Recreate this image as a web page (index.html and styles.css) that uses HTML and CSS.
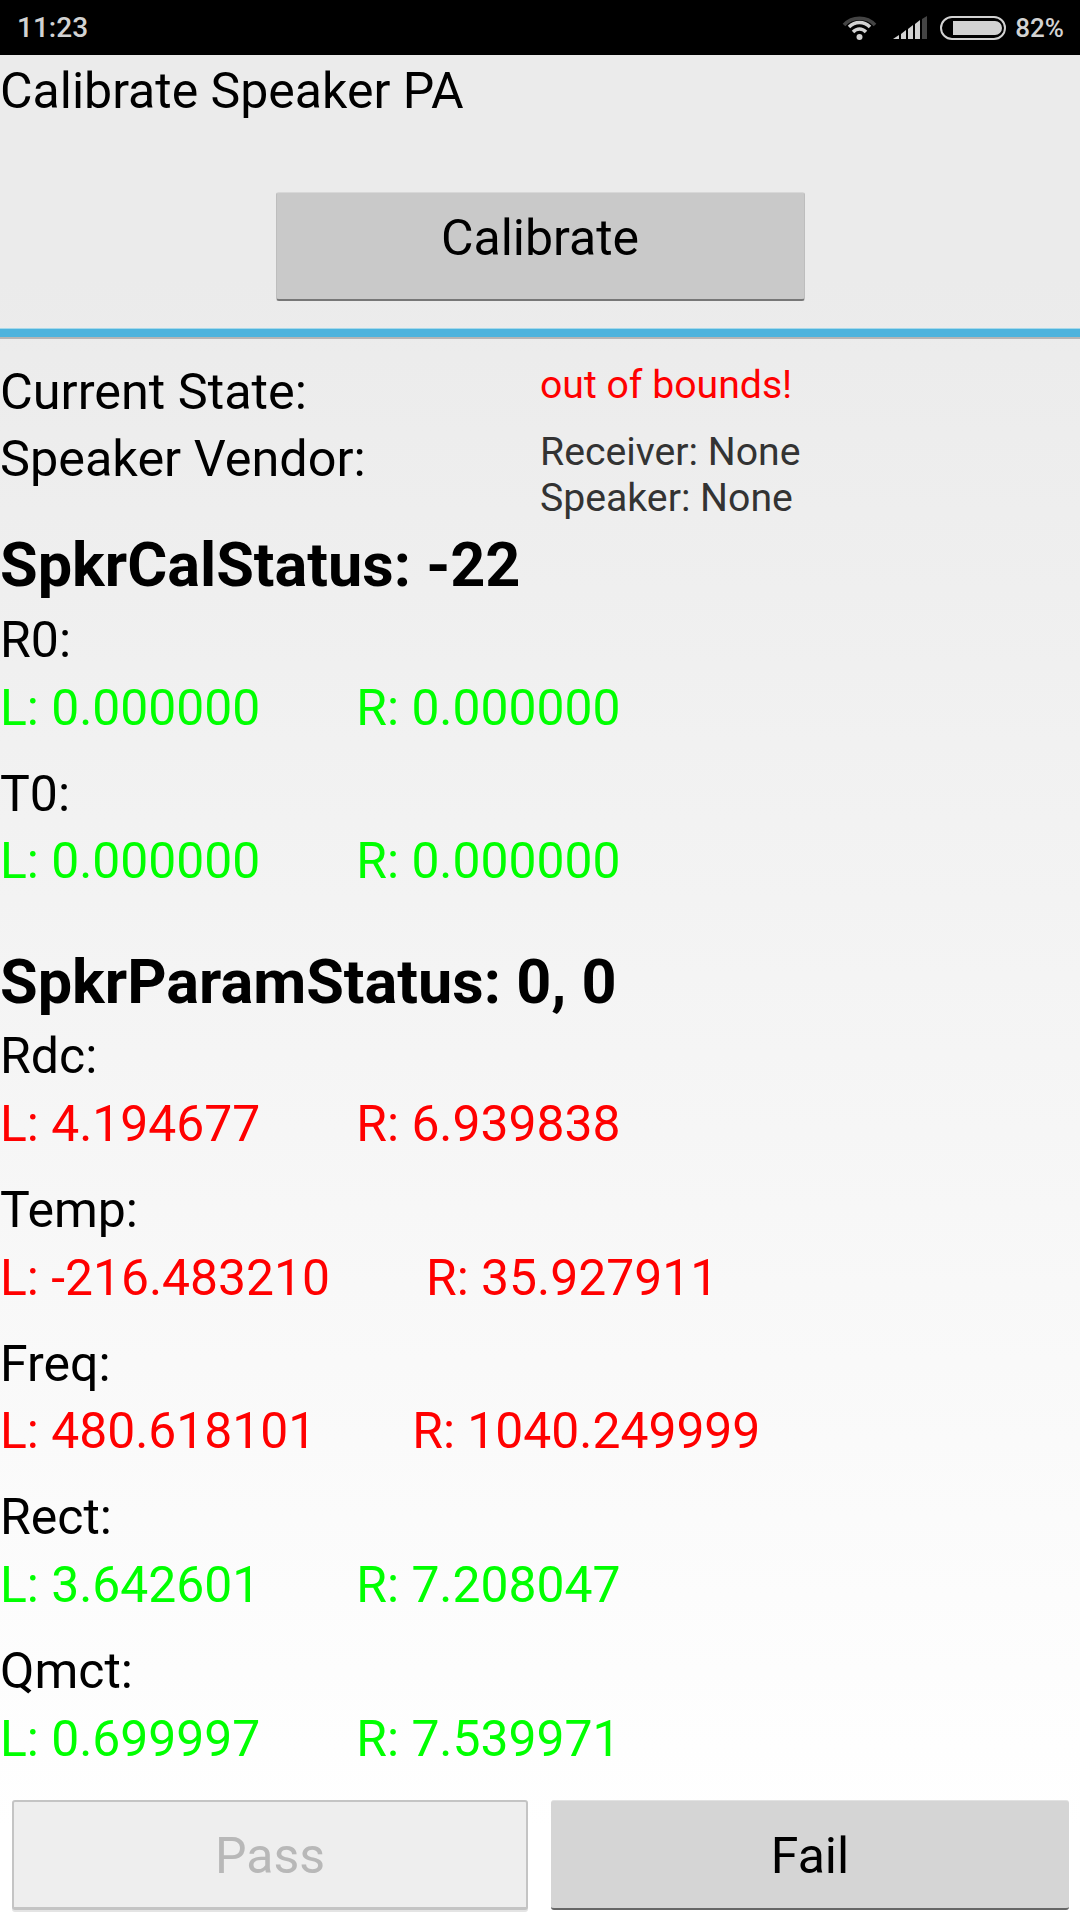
FILE: index.html
```html
<!DOCTYPE html>
<html lang="en">
<head>
    <meta charset="UTF-8">
    <meta name="viewport" content="width=device-width, initial-scale=1.0">
    <title>Calibrate Speaker PA</title>
    <link rel="stylesheet" href="styles.css">
</head>
<body>
    <div class="status-bar">
        <div class="clock">11:23</div>
        <div class="status-icons">
            <svg class="wifi" width="35" height="24" viewBox="0 0 35 24">
                <path class="wifi-off" d="M2 9 C10 0 25 0 33 9" />
                <path d="M7 11 C13 5 22 5 28 11" />
                <path d="M11 16 C15 12 20 12 24 16" />
                <circle cx="17.5" cy="21" r="3" />
            </svg>
            <svg class="signal" width="34" height="23" viewBox="0 0 34 23">
                <polygon points="0,23 6,19 6,23" />
                <polygon points="8,18 13,14 13,23 8,23" />
                <polygon points="15,13 20,9 20,23 15,23" />
                <polygon points="22,8 27,4 27,23 22,23" />
                <polygon class="signal-off" points="29,3 34,0 34,23 29,23" />
            </svg>
            <div class="battery"><div class="battery-level"></div></div>
            <div class="percent">82%</div>
        </div>
    </div>

    <div class="page">
        <div class="title">Calibrate Speaker PA</div>

        <div class="calibrate-wrap">
            <button class="btn calibrate-btn">Calibrate</button>
        </div>
        <div class="divider"></div>

        <div class="state-grid">
            <div class="state-label">Current State:</div>
            <div class="state-error">out of bounds!</div>
            <div class="state-label">Speaker Vendor:</div>
            <div class="state-vendor">Receiver: None<br>Speaker: None</div>
        </div>

        <h2 class="heading">SpkrCalStatus: -22</h2>
        <div class="param">
            <div class="param-name">R0:</div>
            <div class="values good"><span>L: 0.000000</span><span>R: 0.000000</span></div>
        </div>
        <div class="param">
            <div class="param-name">T0:</div>
            <div class="values good"><span>L: 0.000000</span><span>R: 0.000000</span></div>
        </div>

        <h2 class="heading heading-params">SpkrParamStatus: 0, 0</h2>
        <div class="param">
            <div class="param-name">Rdc:</div>
            <div class="values bad"><span>L: 4.194677</span><span>R: 6.939838</span></div>
        </div>
        <div class="param">
            <div class="param-name">Temp:</div>
            <div class="values bad"><span>L: -216.483210</span><span>R: 35.927911</span></div>
        </div>
        <div class="param">
            <div class="param-name">Freq:</div>
            <div class="values bad"><span>L: 480.618101</span><span>R: 1040.249999</span></div>
        </div>
        <div class="param">
            <div class="param-name">Rect:</div>
            <div class="values good"><span>L: 3.642601</span><span>R: 7.208047</span></div>
        </div>
        <div class="param">
            <div class="param-name">Qmct:</div>
            <div class="values good"><span>L: 0.699997</span><span>R: 7.539971</span></div>
        </div>

        <div class="bottom-buttons">
            <button class="btn pass-btn" disabled>Pass</button>
            <button class="btn fail-btn">Fail</button>
        </div>
    </div>
</body>
</html>
```

FILE: styles.css
```css
* {
    margin: 0;
    padding: 0;
    box-sizing: border-box;
}

body {
    font-family: Roboto, sans-serif;
    width: 1080px;
    height: 1920px;
    overflow: hidden;
    color: #000;
}

.status-bar {
    height: 55px;
    background: #000;
    color: #d2d2d2;
    display: flex;
    justify-content: space-between;
    align-items: center;
    padding: 0 16px 0 17px;
    font-size: 26px;
    font-weight: 500;
}

.clock {
    font-size: 28px;
}

.status-icons {
    display: flex;
    align-items: center;
}

.wifi {
    fill: none;
    stroke: #d2d2d2;
    stroke-width: 3.5;
    margin-right: 16px;
}

.wifi circle {
    fill: #d2d2d2;
    stroke: none;
}

.wifi .wifi-off {
    stroke: #444;
}

.signal {
    fill: #d2d2d2;
    margin-right: 13px;
}

.signal .signal-off {
    fill: #444;
}

.battery {
    width: 66px;
    height: 24px;
    border: 2px solid #d2d2d2;
    border-radius: 12px;
    padding: 3px 2px 3px 11px;
    margin-right: 9px;
}

.battery-level {
    height: 100%;
    background: #d2d2d2;
    border-radius: 0 8px 8px 0;
}

.page {
    height: 1865px;
    background: linear-gradient(#ebebeb, #ebebeb 12%, #fff 95%);
    display: flex;
    flex-direction: column;
}

.title {
    font-size: 50px;
    line-height: 56px;
    padding-top: 8px;
}

.calibrate-wrap {
    display: flex;
    justify-content: center;
    margin-top: 73px;
}

.btn {
    font-family: Roboto, sans-serif;
    font-size: 50px;
    color: #000;
    border: none;
    border-radius: 3px;
}

.calibrate-btn {
    width: 529px;
    height: 109px;
    padding-bottom: 16px;
    background: #c9c9c9;
    border: 1px solid #bdbdbd;
    border-top-color: #d8d8d8;
    border-bottom: 2px solid #777;
}

.divider {
    height: 11px;
    margin-top: 27px;
    background: #4db3dd;
    border-top: 1px solid #a5d8ea;
    border-bottom: 2px solid #b5b5b5;
}

.state-grid {
    display: grid;
    grid-template-columns: 540px 1fr;
    grid-template-rows: 67px auto;
    padding-top: 25px;
}

.state-label {
    font-size: 50.4px;
    line-height: 56px;
}

.state-error {
    font-size: 39.2px;
    line-height: 44px;
    margin-top: -1px;
    color: #f00;
}

.state-vendor {
    font-size: 39.2px;
    line-height: 46px;
    margin-top: -2px;
    color: #333;
}

.heading {
    font-size: 61.2px;
    line-height: 70px;
    font-weight: 700;
    margin-top: 9px;
    margin-bottom: 2px;
}

.heading-params {
    margin-top: 38px;
    margin-bottom: 1px;
}

.param {
    margin-bottom: 20.2px;
}

.param-name {
    font-size: 50px;
    line-height: 56px;
    margin-top: 10px;
}

.values {
    display: flex;
    gap: 96px;
    font-size: 49.8px;
    line-height: 56px;
    margin-top: 11.5px;
}

.good {
    color: #0f0;
}

.bad {
    color: #f00;
}

.bottom-buttons {
    display: flex;
    gap: 23px;
    padding: 0 0 10px 12px;
    margin-top: auto;
}

.bottom-buttons .btn {
    height: 110px;
    padding-top: 3px;
}

.pass-btn {
    width: 516px;
    background: #eee;
    color: #b8b8b8;
    border: 2px solid #c4c4c4;
    border-bottom-width: 3px;
    box-shadow: 0 2px 0 #e4e4e4;
}

.fail-btn {
    width: 518px;
    background: #d5d5d5;
    border-top: 1px solid #e2e2e2;
    border-bottom: 2px solid #666;
}
```
